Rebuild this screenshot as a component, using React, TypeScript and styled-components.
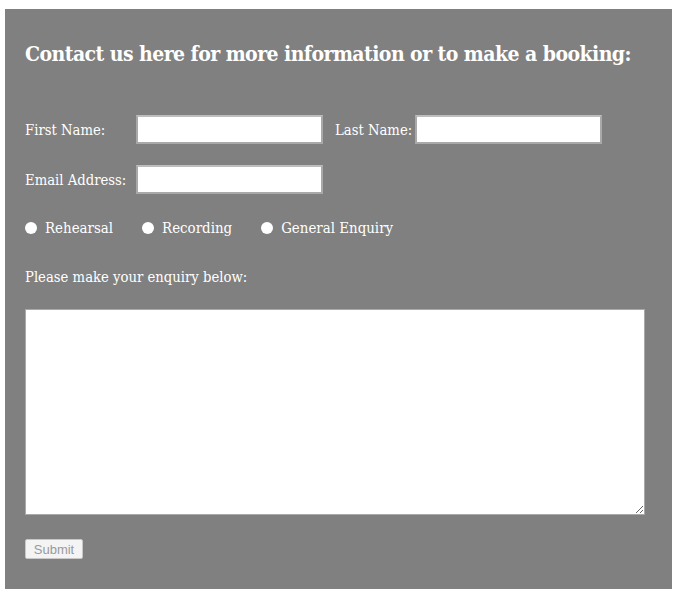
import React from "react";
import styled, { createGlobalStyle } from "styled-components";

const Global = createGlobalStyle`
  html, body { margin: 0; padding: 0; background: #ffffff; }
  body { font-family: "DejaVu Serif Condensed", "Liberation Serif", serif; }
`;

const Panel = styled.form`
  margin: 9px 9px 0 5px;
  background: #808080;
  padding: 29px 20px 30px 20px;
  display: flex;
  flex-direction: column;
  color: #ffffff;
`;

const Heading = styled.h2`
  margin: 0;
  font-family: "DejaVu Serif Condensed", "Liberation Serif", serif;
  font-size: 21px;
  line-height: 31px;
  font-weight: bold;
  letter-spacing: -0.55px;
`;

const Row = styled.div<{ $mt: number }>`
  display: flex;
  align-items: center;
  margin-top: ${(p) => p.$mt}px;
  height: 29px;
`;

const Label = styled.label<{ $w?: number; $ml?: number }>`
  font-size: 14.7px;
  ${(p) => (p.$w ? `width: ${p.$w}px; flex: none;` : "margin-right: 3px;")}
  margin-left: ${(p) => p.$ml ?? 0}px;
`;

const TextInput = styled.input`
  box-sizing: border-box;
  width: 187px;
  height: 29px;
  border: 2px solid #a9a9a9;
  border-top-color: #bdbdbd;
  background: #ffffff;
  margin: 0;
  padding: 0 4px;
`;

const RadioRow = styled.div`
  display: flex;
  align-items: center;
  gap: 29px;
  margin-top: 24px;
  height: 20px;
`;

const RadioItem = styled.label`
  display: flex;
  align-items: center;
  gap: 8px;
  font-size: 14.9px;
`;

const Radio = styled.input`
  appearance: none;
  width: 12px;
  height: 12px;
  margin: 0;
  border-radius: 50%;
  background: #ffffff;
  border: none;
`;

const Prompt = styled.p`
  margin: 29px 0 0 0;
  font-size: 14.7px;
  line-height: 20px;
`;

const Message = styled.textarea`
  box-sizing: border-box;
  margin-top: 22px;
  width: 620px;
  height: 206px;
  border: 1px solid #a9a9a9;
  background: #ffffff;
`;

const Submit = styled.button`
  align-self: flex-start;
  margin-top: 24px;
  box-sizing: border-box;
  width: 58px;
  height: 20px;
  padding: 0;
  font-family: "Liberation Sans", Arial, sans-serif;
  font-size: 13px;
  color: #9a9a9a;
  background: #f4f4f4;
  border: 1px solid #c8c8c8;
  border-radius: 2px;
`;

export default function App() {
  return (
    <>
      <Global />
      <Panel onSubmit={(e) => e.preventDefault()}>
        <Heading>Contact us here for more information or to make a booking:</Heading>
        <Row $mt={46}>
          <Label $w={111}>First Name:</Label>
          <TextInput type="text" />
          <Label $ml={12}>Last Name:</Label>
          <TextInput type="text" />
        </Row>
        <Row $mt={21}>
          <Label $w={111}>Email Address:</Label>
          <TextInput type="email" />
        </Row>
        <RadioRow>
          <RadioItem>
            <Radio type="radio" name="kind" />
            Rehearsal
          </RadioItem>
          <RadioItem>
            <Radio type="radio" name="kind" />
            Recording
          </RadioItem>
          <RadioItem>
            <Radio type="radio" name="kind" />
            General Enquiry
          </RadioItem>
        </RadioRow>
        <Prompt>Please make your enquiry below:</Prompt>
        <Message />
        <Submit type="submit" disabled>Submit</Submit>
      </Panel>
    </>
  );
}
